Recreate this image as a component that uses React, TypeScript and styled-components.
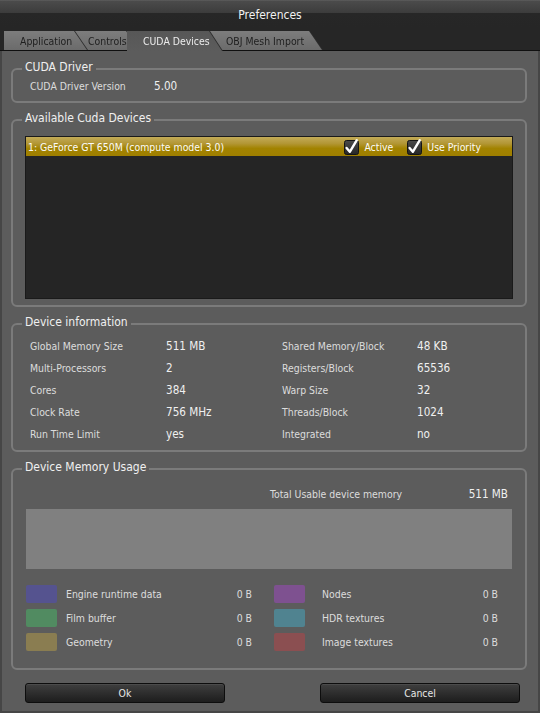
import React from 'react';
import styled, { createGlobalStyle } from 'styled-components';

const GlobalStyle = createGlobalStyle`
  * { box-sizing: border-box; }
  html, body {
    margin: 0;
    padding: 0;
    background: #2b2b2b;
  }
  body {
    font-family: "DejaVu Sans Condensed", "DejaVu Sans", "Liberation Sans", sans-serif;
    font-stretch: semi-condensed;
  }
`;

const Window = styled.div`
  width: 540px;
  height: 713px;
  display: flex;
  flex-direction: column;
  background: #5c5c5c;
  color: #dedede;
  font-size: 10.4px;
`;

const TitleBar = styled.div`
  height: 28px;
  padding-top: 2px;
  display: flex;
  align-items: center;
  justify-content: center;
  background: linear-gradient(#646464 0, #4b4b4b 1px, #3c3c3c 13px, #272727 13px, #262626 100%);
  color: #f2f2f2;
  font-size: 12px;
`;

const TabBar = styled.div`
  height: 23px;
  display: flex;
  align-items: flex-end;
  padding-left: 4px;
  background: #262626;
  border-bottom: 1px solid #101010;
`;

const TabWrap = styled.div<{ $z: number; $overlap: number; $active?: boolean }>`
  position: relative;
  z-index: ${p => p.$z};
  margin-left: ${p => -p.$overlap}px;
  margin-bottom: ${p => (p.$active ? -1 : 0)}px;
  filter: drop-shadow(1px 0 0 #2c2c2c);
`;

const Tab = styled.div<{ $width: number; $pad: number; $active?: boolean }>`
  width: ${p => p.$width}px;
  height: ${p => (p.$active ? 20 : 19)}px;
  padding-left: ${p => p.$pad}px;
  display: flex;
  align-items: center;
  white-space: nowrap;
  overflow: hidden;
  clip-path: polygon(0 0, calc(100% - 13px) 0, 100% 100%, 0 100%);
  background: ${p =>
    p.$active ? 'linear-gradient(#575757, #5c5c5c)' : 'linear-gradient(#7d7d7d, #6b6b6b)'};
  color: ${p => (p.$active ? '#ececec' : '#1e1e1e')};
  font-size: 10.4px;
`;

const Body = styled.div`
  flex: 1;
  display: flex;
  flex-direction: column;
  gap: 8px;
  padding: 9px 11px 0 9px;
  border: 2px solid #464646;
  border-top: none;
`;

const Group = styled.fieldset`
  margin: 0;
  padding: 0;
  min-width: 0;
  border: 2px solid #7b7b7b;
  border-radius: 6px;
`;

const GroupTitle = styled.legend`
  margin-left: 9px;
  padding: 0 3px 4px;
  font-size: 12px;
  line-height: 14px;
  color: #f0f0f0;
`;

const DriverRow = styled.div`
  display: grid;
  grid-template-columns: 124px auto;
  align-items: center;
  padding: 1px 0 8px 17px;
  line-height: 14px;
`;

const Label = styled.span`
  font-size: 10.4px;
  color: #dcdcdc;
  white-space: nowrap;
`;

const Value = styled.span`
  font-size: 11.6px;
  color: #f0f0f0;
  white-space: nowrap;
`;

const DeviceList = styled.div`
  height: 163px;
  margin: 7px 12px 6px;
  background: #252525;
  border: 1px solid #1a1a1a;
`;

const DeviceRow = styled.div`
  height: 19px;
  display: flex;
  align-items: center;
  gap: 14px;
  padding: 0 31px 0 2px;
  background: linear-gradient(#c3ab58 0%, #b29634 35%, #a28300 60%, #9f7f00 100%);
  color: #fbfbfb;
`;

const DeviceName = styled.span`
  flex: 1;
  white-space: nowrap;
`;

const CheckItem = styled.label`
  display: flex;
  align-items: center;
  gap: 4px;
  white-space: nowrap;
`;

const InfoGrid = styled.div`
  display: grid;
  grid-template-columns: 136px 116px 135px 1fr;
  grid-auto-rows: 22px;
  align-items: center;
  padding: 2px 0 5px 17px;
`;

const TotalRow = styled.div`
  display: flex;
  justify-content: space-between;
  align-items: center;
  height: 14px;
  margin-top: 9px;
  padding: 0 17px 0 257px;
`;

const MemoryBar = styled.div`
  height: 60px;
  margin: 8px 13px 0;
  background: #808080;
`;

const LegendGrid = styled.div`
  display: grid;
  grid-template-columns: 226px 224px;
  column-gap: 22px;
  row-gap: 6px;
  grid-auto-flow: column;
  grid-template-rows: repeat(3, 18px);
  margin: 16px 0 0;
  padding: 0 0 17px 13px;
`;

const LegendItem = styled.div<{ $gap: number }>`
  display: grid;
  grid-template-columns: 31px 1fr auto;
  column-gap: ${p => p.$gap}px;
  align-items: center;
`;

const Swatch = styled.div<{ $color: string }>`
  height: 18px;
  border-radius: 2px;
  background: ${p => p.$color};
`;

const ButtonRow = styled.div`
  display: flex;
  justify-content: space-between;
  padding: 5px 7px 0 14px;
`;

const Button = styled.button`
  width: 200px;
  height: 20px;
  padding: 0;
  background: linear-gradient(#3f3f3f, #1d1d1d);
  border: 1px solid #0d0d0d;
  border-radius: 3px;
  box-shadow: inset 0 1px 0 rgba(255, 255, 255, 0.07);
  color: #e6e6e6;
  font: inherit;
  font-size: 10.4px;
`;

const CheckBox: React.FC = () => (
  <svg width="16" height="16" viewBox="0 0 16 16" style={{ overflow: 'visible' }}>
    <defs>
      <linearGradient id="cbFill" x1="0" y1="0" x2="0" y2="1">
        <stop offset="0" stopColor="#4a4a4a" />
        <stop offset="1" stopColor="#262626" />
      </linearGradient>
    </defs>
    <rect x="0.5" y="1.5" width="14" height="14" rx="2" fill="url(#cbFill)" stroke="#141414" />
    <path
      d="M2.6 9 L5.8 12.8 L12.8 1.2"
      fill="none"
      stroke="#ffffff"
      strokeWidth="2.4"
      strokeLinecap="round"
      strokeLinejoin="round"
    />
  </svg>
);

const tabs = [
  { name: 'Application', width: 83, pad: 16, z: 3, overlap: 0 },
  { name: 'Controls', width: 64, pad: 13, z: 2, overlap: 12 },
  { name: 'CUDA Devices', width: 95, pad: 16, z: 5, overlap: 12, active: true },
  { name: 'OBJ Mesh Import', width: 112, pad: 16, z: 1, overlap: 12 },
];

const deviceInfo: [string, string, string, string][] = [
  ['Global Memory Size', '511 MB', 'Shared Memory/Block', '48 KB'],
  ['Multi-Processors', '2', 'Registers/Block', '65536'],
  ['Cores', '384', 'Warp Size', '32'],
  ['Clock Rate', '756 MHz', 'Threads/Block', '1024'],
  ['Run Time Limit', 'yes', 'Integrated', 'no'],
];

const memoryLegend = [
  { label: 'Engine runtime data', color: '#55538f', gap: 9 },
  { label: 'Film buffer', color: '#518b61', gap: 9 },
  { label: 'Geometry', color: '#8a7d51', gap: 9 },
  { label: 'Nodes', color: '#7e5190', gap: 17 },
  { label: 'HDR textures', color: '#508390', gap: 17 },
  { label: 'Image textures', color: '#8b4f51', gap: 17 },
];

const App: React.FC = () => {
  return (
    <>
      <GlobalStyle />
      <Window>
        <TitleBar>Preferences</TitleBar>
        <TabBar>
          {tabs.map(t => (
            <TabWrap key={t.name} $z={t.z} $overlap={t.overlap} $active={t.active}>
              <Tab $width={t.width} $pad={t.pad} $active={t.active}>
                {t.name}
              </Tab>
            </TabWrap>
          ))}
        </TabBar>

        <Body>
          <Group>
            <GroupTitle>CUDA Driver</GroupTitle>
            <DriverRow>
              <Label>CUDA Driver Version</Label>
              <Value>5.00</Value>
            </DriverRow>
          </Group>

          <Group>
            <GroupTitle>Available Cuda Devices</GroupTitle>
            <DeviceList>
              <DeviceRow>
                <DeviceName>1: GeForce GT 650M (compute model 3.0)</DeviceName>
                <CheckItem>
                  <CheckBox />
                  Active
                </CheckItem>
                <CheckItem>
                  <CheckBox />
                  Use Priority
                </CheckItem>
              </DeviceRow>
            </DeviceList>
          </Group>

          <Group>
            <GroupTitle>Device information</GroupTitle>
            <InfoGrid>
              {deviceInfo.map(([l1, v1, l2, v2]) => (
                <React.Fragment key={l1}>
                  <Label>{l1}</Label>
                  <Value>{v1}</Value>
                  <Label>{l2}</Label>
                  <Value>{v2}</Value>
                </React.Fragment>
              ))}
            </InfoGrid>
          </Group>

          <Group>
            <GroupTitle>Device Memory Usage</GroupTitle>
            <TotalRow>
              <Label>Total Usable device memory</Label>
              <Value>511 MB</Value>
            </TotalRow>
            <MemoryBar />
            <LegendGrid>
              {memoryLegend.map(m => (
                <LegendItem key={m.label} $gap={m.gap}>
                  <Swatch $color={m.color} />
                  <Label>{m.label}</Label>
                  <Label>0 B</Label>
                </LegendItem>
              ))}
            </LegendGrid>
          </Group>

          <ButtonRow>
            <Button>Ok</Button>
            <Button>Cancel</Button>
          </ButtonRow>
        </Body>
      </Window>
    </>
  );
};

export default App;
